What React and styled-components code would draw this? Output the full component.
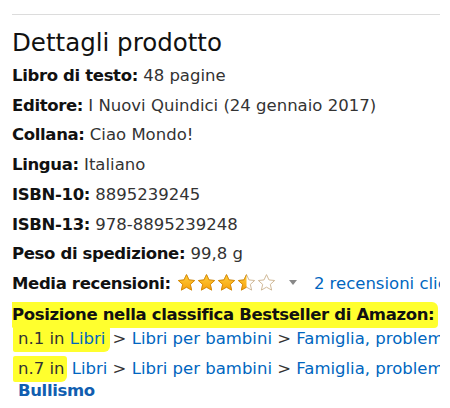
import React from "react";
import styled, { createGlobalStyle } from "styled-components";

const Global = createGlobalStyle`
  html, body { margin: 0; padding: 0; background: #fff; }
  body { font-family: "DejaVu Sans", Verdana, sans-serif; color: #111; }
`;

const Page = styled.div`
  width: 428px;
  margin-left: 12px;
  overflow: hidden;
  padding-top: 14px;
`;

const Rule = styled.hr`
  border: 0;
  border-top: 1px solid #dcdcdc;
  margin: 0;
`;

const Title = styled.h2`
  font-size: 24.5px;
  font-weight: 400;
  margin: 12px 0 0;
  line-height: 32px;
  color: #111;
  white-space: nowrap;
`;

const List = styled.ul`
  list-style: none;
  margin: 2px 0 0;
  padding: 0;
  font-size: 16.5px;
`;

const Item = styled.li`
  line-height: 29.7px;
  white-space: nowrap;
  color: #333;
`;

const HeadItem = styled.li`
  line-height: 24px;
  padding-top: 3px;
  white-space: nowrap;
`;

const Label = styled.b`
  color: #111;
  font-weight: 700;
  letter-spacing: -0.35px;
`;

const Link = styled.a`
  color: ${(p) => (p.$bold ? "#115eb0" : "#0066c0")};
  text-decoration: none;
  font-weight: ${(p) => (p.$bold ? 700 : 400)};
  letter-spacing: ${(p) => (p.$bold ? "-0.35px" : "0")};
`;

const Stars = styled.span`
  display: inline-flex;
  gap: 1px;
  vertical-align: -3px;
  margin-left: 6px;
`;

const Caret = styled.span`
  display: inline-block;
  margin: 0 17px 0 13px;
  width: 0;
  height: 0;
  border-left: 4px solid transparent;
  border-right: 4px solid transparent;
  border-top: 5px solid #888;
  vertical-align: 4px;
`;

const Band = styled.span`
  display: inline-block;
  background: #ffff2e;
  margin-left: -7px;
  padding: 0 4px 0 7px;
  line-height: 26px;
  border-radius: 3px 6px 4px 10px;
`;

const Mark = styled.span`
  background: #ffff2e;
  margin-left: -5px;
  padding: 3px ${(p) => p.$pr || 3}px 4px 5px;
  margin-right: ${(p) => -(p.$pr || 3) + 2}px;
  border-radius: 2px 3px 6px 2px;
`;

const Ranks = styled.div`
  display: flex;
  flex-direction: column;
  font-size: 16.5px;
  color: #333;
  padding-left: 6px;
`;

const RankRow = styled.div`
  line-height: 22px;
  white-space: nowrap;
  margin-top: ${(p) => (p.$gap ? 8 : 0)}px;
`;

const STAR =
  "M10 1.2 L12.6 6.8 L18.6 7.4 L14 11.5 L15.4 17.5 L10 14.4 L4.6 17.5 L6 11.5 L1.4 7.4 L7.4 6.8 Z";

function Star({ fill, id }) {
  return (
    <svg width="19" height="19" viewBox="0 0 20 19">
      <defs>
        <linearGradient id={id + "f"} x1="0" x2="0" y1="0" y2="1">
          <stop offset="0" stopColor="#ffce3a" />
          <stop offset="1" stopColor="#f7a10d" />
        </linearGradient>
        <clipPath id={id + "c"}>
          <rect x="0" y="0" width={20 * fill} height="19" />
        </clipPath>
      </defs>
      <path d={STAR} fill="#fff" stroke="#cdb592" strokeWidth="1" strokeLinejoin="round" />
      {fill > 0 && (
        <path
          d={STAR}
          fill={`url(#${id}f)`}
          stroke="#d88a00"
          strokeWidth="1"
          strokeLinejoin="round"
          clipPath={`url(#${id}c)`}
        />
      )}
    </svg>
  );
}

const rows = [
  ["Libro di testo:", "48 pagine"],
  ["Editore:", "I Nuovi Quindici (24 gennaio 2017)"],
  ["Collana:", "Ciao Mondo!"],
  ["Lingua:", "Italiano"],
  ["ISBN-10:", "8895239245"],
  ["ISBN-13:", "978-8895239248"],
  ["Peso di spedizione:", "99,8 g"],
];

export default function App() {
  return (
    <>
      <Global />
      <Page>
        <Rule />
        <Title>Dettagli prodotto</Title>
        <List>
          {rows.map(([l, v]) => (
            <Item key={l}>
              <Label>{l}</Label> {v}
            </Item>
          ))}
          <Item>
            <Label>Media recensioni:</Label>
            <Stars>
              <Star fill={1} id="s1" />
              <Star fill={1} id="s2" />
              <Star fill={1} id="s3" />
              <Star fill={0.5} id="s4" />
              <Star fill={0} id="s5" />
            </Stars>
            <Caret />
            <Link href="#">2 recensioni clienti</Link>
          </Item>
          <HeadItem>
            <Band>
              <Label>Posizione nella classifica Bestseller di Amazon:</Label>
            </Band>
          </HeadItem>
        </List>
        <Ranks>
          <RankRow>
            <Mark $pr={5}>
              n.1 in <Link href="#">Libri</Link>
            </Mark>{" "}
            &gt; <Link href="#">Libri per bambini</Link> &gt;{" "}
            <Link href="#">Famiglia, problemi personali e sociali</Link>
          </RankRow>
          <RankRow $gap>
            <Mark $pr={2}>n.7 in</Mark> <Link href="#">Libri</Link> &gt;{" "}
            <Link href="#">Libri per bambini</Link> &gt;{" "}
            <Link href="#">Famiglia, problemi personali e sociali</Link>
          </RankRow>
          <RankRow>
            <Link href="#" $bold>
              Bullismo
            </Link>
          </RankRow>
        </Ranks>
      </Page>
    </>
  );
}
